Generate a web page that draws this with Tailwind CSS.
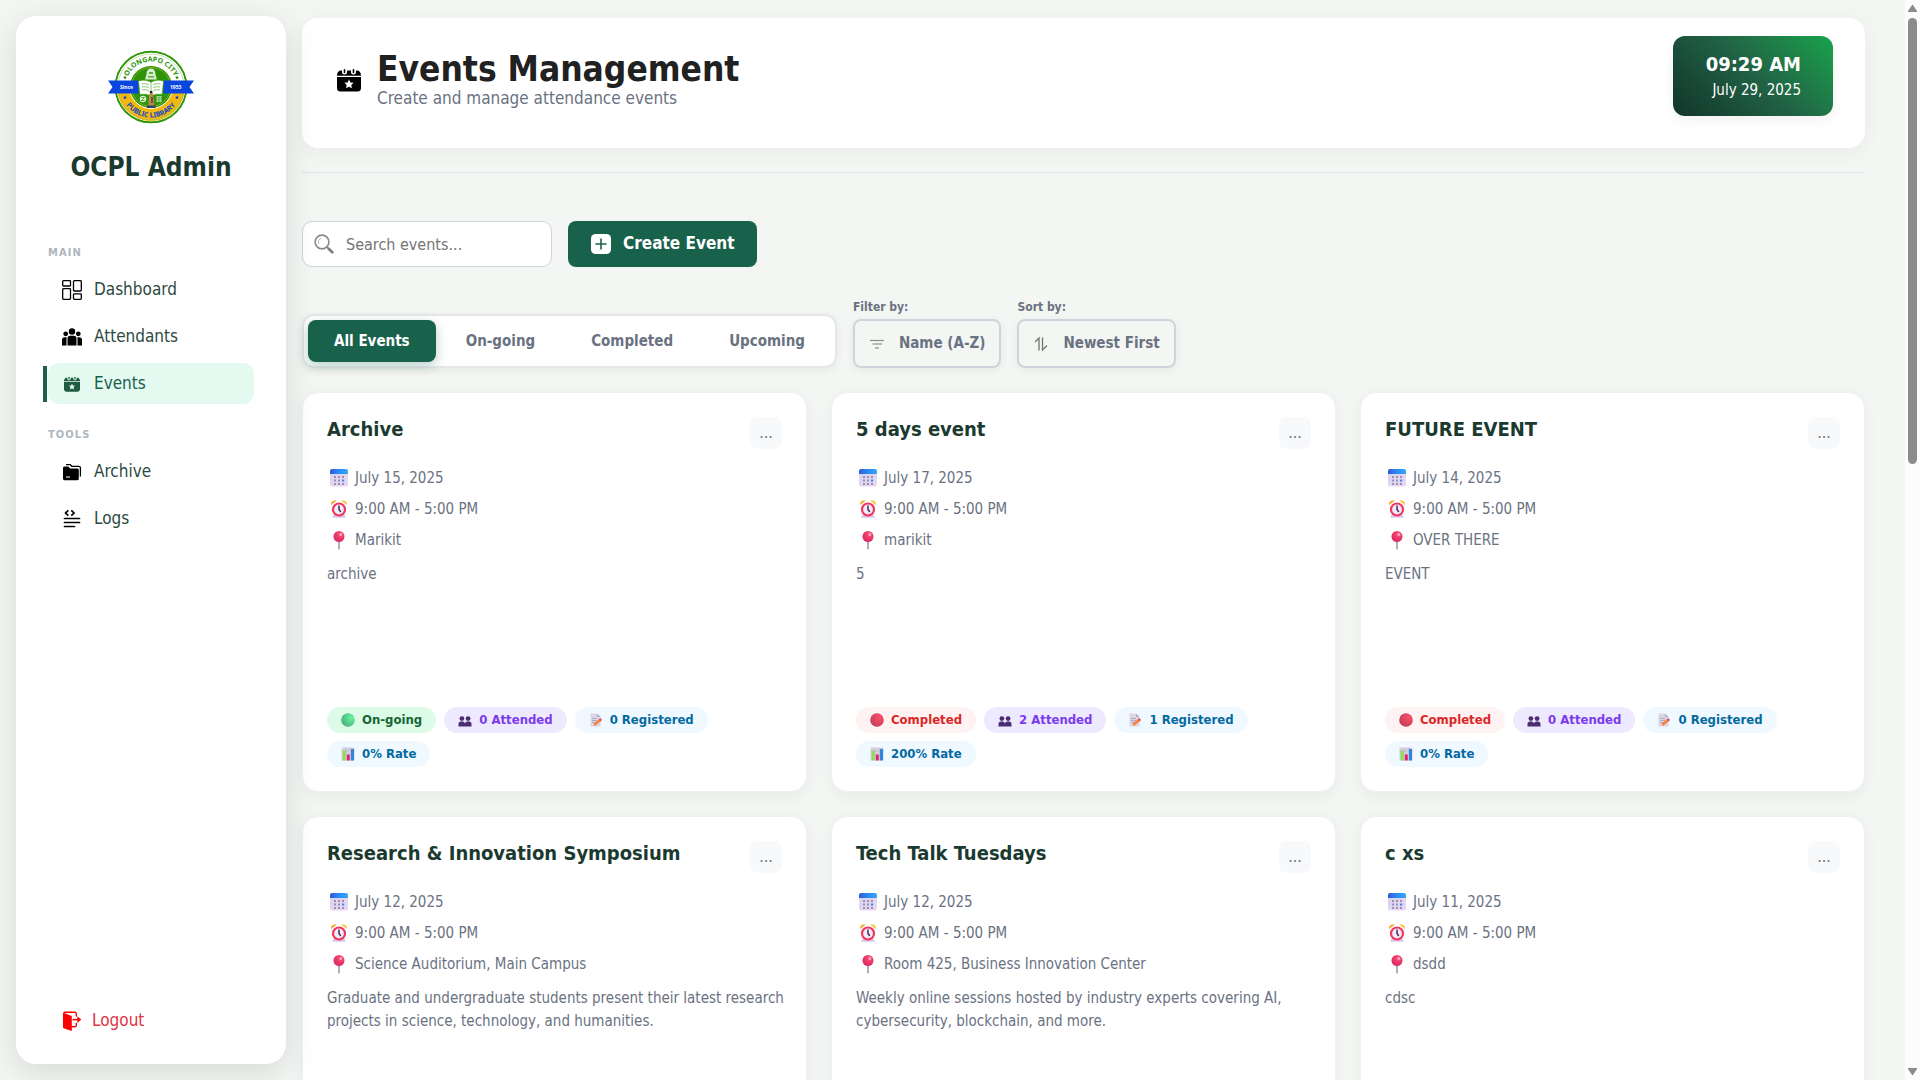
<!DOCTYPE html>
<html lang="en">
<head>
<meta charset="utf-8">
<meta name="viewport" content="width=device-width, initial-scale=1">
<title>Events Management - OCPL Admin</title>
<script src="https://cdn.jsdelivr.net/npm/@tailwindcss/browser@4"></script>
</head>
<body class="flex h-screen overflow-hidden bg-[#f4f6f3] font-['DejaVu_Sans_Condensed','Noto_Sans',sans-serif] text-gray-500">

<svg class="absolute size-0" aria-hidden="true">
  <defs>
    <linearGradient id="calTop" x1="0" x2="1"><stop offset="0" stop-color="#2f5bd8"/><stop offset=".5" stop-color="#2b8cf5"/><stop offset="1" stop-color="#35a6ff"/></linearGradient>
    <linearGradient id="calBody" x1="0" x2="1" y2="1"><stop offset="0" stop-color="#d9d3ee"/><stop offset="1" stop-color="#ead8f3"/></linearGradient>
    <radialGradient id="greenBall" cx=".75" cy=".35" r=".9"><stop offset="0" stop-color="#63f59a"/><stop offset="1" stop-color="#4aa27c"/></radialGradient>
    <radialGradient id="redBall" cx=".7" cy=".3" r=".9"><stop offset="0" stop-color="#fb4f68"/><stop offset="1" stop-color="#b93a55"/></radialGradient>
    <radialGradient id="pinBall" cx=".65" cy=".3" r=".8"><stop offset="0" stop-color="#ff6a8d"/><stop offset=".4" stop-color="#f0386b"/><stop offset="1" stop-color="#d42a63"/></radialGradient>
  </defs>
  <symbol id="i-event" viewBox="0 0 24 24">
    <path fill="currentColor" fill-rule="evenodd" d="M0 9h24v11a3.500 3.500 0 0 1-3.500 3.500h-17A3.500 3.500 0 0 1 0 20zM12 11.500l1.400 2.900 3.200.4-2.300 2.200.6 3.200-2.900-1.500-2.900 1.500.6-3.200-2.300-2.200 3.200-.4z"/>
    <path fill="currentColor" d="M0 7.800C0 4.500 1.500 2.500 4 2.500h1V4a2.500 2.500 0 0 0 5 0V2.500h4V4a2.500 2.500 0 0 0 5 0V2.500h1c2.500 0 4 2 4 5.300z"/>
    <rect x="6.700" y="1" width="1.600" height="4.200" rx=".8" fill="currentColor"/><rect x="15.700" y="1" width="1.600" height="4.200" rx=".8" fill="currentColor"/>
  </symbol>
  <symbol id="i-dash" viewBox="0 0 20 20"><g fill="none" stroke="currentColor" stroke-width="1.300"><rect x=".7" y=".7" width="7.800" height="5.300" rx=".8"/><rect x="11.500" y=".7" width="7.800" height="10.300" rx=".8"/><rect x=".7" y="8.700" width="7.800" height="10.600" rx=".8"/><rect x="11.500" y="13.800" width="7.800" height="5.500" rx=".8"/></g></symbol>
  <symbol id="i-people" viewBox="0 0 20 20"><g fill="currentColor"><circle cx="10" cy="4.500" r="3.200"/><circle cx="3.700" cy="6.800" r="2.400"/><circle cx="16.300" cy="6.800" r="2.400"/><path d="M5.500 18.500v-7A2.700 2.700 0 0 1 8.200 8.800h3.600a2.700 2.700 0 0 1 2.700 2.700v7zM0 18.500v-5.500a2.800 2.800 0 0 1 2.800-2.800h2A4 4 0 0 0 4.500 12v6.500zM20 18.500v-5.500a2.800 2.800 0 0 0-2.800-2.800h-2a4 4 0 0 1 .3 1.800v6.500z"/></g></symbol>
  <symbol id="i-archive" viewBox="0 0 20 20"><path fill="none" stroke="currentColor" stroke-width="1.300" d="M4 2.600h4.200l1.500 1.700h7.200c.9 0 1.500.6 1.500 1.500v8.700"/><path fill="currentColor" fill-rule="evenodd" d="M1 6c0-1 .6-1.600 1.600-1.600h3.600l2 2h7c1 0 1.600.6 1.600 1.600v8.600c0 1-.6 1.600-1.600 1.600H2.600c-1 0-1.600-.6-1.600-1.600zM4 14.600v1h4v-1z"/></symbol>
  <symbol id="i-logs" viewBox="0 0 20 20"><g fill="none" stroke="currentColor" stroke-width="1.700"><path d="M6.300 1.300 3.600 4l2.700 2.700M9.300 1.300 12 4 9.300 6.700"/><path d="M2.500 9.500h15M2.500 13.500h15M2.500 17.500h10" stroke-linecap="round"/></g></symbol>
  <symbol id="i-logout" viewBox="0 0 20 20"><path fill="currentColor" d="M1 1.500 9.800 5v15L1.600 17.300A1 1 0 0 1 1 16.500z"/><path fill="none" stroke="currentColor" stroke-width="1.400" d="M1.700 1.200h11c1 0 1.600.6 1.600 1.600v2.700M9.500 15.800h3.200c1 0 1.600-.6 1.600-1.600v-2.400"/><path stroke="currentColor" stroke-width="1.500" d="M10.500 8.600H17"/><path fill="currentColor" d="M15.300 5.200 19.300 8.600l-4 3.400z"/></symbol>
  <symbol id="i-search" viewBox="0 0 20 20"><circle cx="8" cy="8" r="6.900" fill="none" stroke="#8a8a8a" stroke-width="1.600"/><path fill="none" stroke="#b0b0b0" stroke-width=".9" d="M4.500 10V7a3.500 3.500 0 0 1 3-2.800"/><path stroke="#808080" stroke-width="1.200" d="m12.600 12.600 2 2"/><path stroke="#808080" stroke-width="2.800" stroke-linecap="round" d="m14.700 14.700 3.600 3.600"/></symbol>
  <symbol id="i-plus" viewBox="0 0 20 20"><rect width="20" height="20" rx="4.500" fill="#fff"/><path stroke="#18624b" stroke-width="1.600" stroke-linecap="round" d="M10 5v10M5 10h10"/></symbol>
  <symbol id="i-filter" viewBox="0 0 16 16"><g stroke="#8b8f8b"><path stroke-width="1.200" d="M1 4.500h14"/><path stroke-width="1.600" stroke="#a7aaa7" d="M3.500 8h9.500"/><path stroke-width="1.200" d="M6 12h4"/></g></symbol>
  <symbol id="i-sort" viewBox="0 0 16 16"><g fill="none" stroke="#6f746f" stroke-width="1.300"><path d="M2 6 6 2v12.500M9.500 1.500V14l4.500-4.500"/></g></symbol>
  <symbol id="e-cal" viewBox="0 0 20 20"><path fill="url(#calBody)" d="M1 5h18v11.500a2 2 0 0 1-2 2H3a2 2 0 0 1-2-2z"/><path fill="url(#calTop)" d="M3 1h14a2 2 0 0 1 2 2v3H1V3a2 2 0 0 1 2-2z"/><g fill="#9a8fb5"><path d="M5 8h2v2H5zM9 8h2v2H9zM13 8h2v2h-2zM5 11.500h2v2H5zM9 11.500h2v2H9zM5 15h2v2H5zM9 15h2v2H9zM13 15h2v2h-2z"/></g><path fill="#2b8cf5" d="M13 11.500h2.200v2H13z"/></symbol>
  <symbol id="e-clock" viewBox="0 0 20 20"><path fill="#d9c6ec" d="m4.500 16-1.500 2.800h14L15.500 16z"/><path fill="#f6a92a" d="M2 6C1.500 3 4 .8 7.800 1.800z"/><path fill="#fbc53a" d="M18 6c.5-3-2-5.200-5.800-4.200z"/><circle cx="10" cy="10.500" r="6" fill="#f4eafa" stroke="#f0365f" stroke-width="2.200"/><path fill="none" stroke="#43305f" stroke-width="1.500" stroke-linecap="round" d="M10 7v3.500l1.500 2"/></symbol>
  <symbol id="e-pin" viewBox="0 0 20 20"><path stroke="#aaa3b8" stroke-width="1.800" stroke-linecap="round" d="M10 10v8.500"/><circle cx="10" cy="6.500" r="5.500" fill="url(#pinBall)"/><circle cx="11.800" cy="4.600" r="1.300" fill="#ffb3c6"/></symbol>
  <symbol id="e-green" viewBox="0 0 14 14"><circle cx="7" cy="7" r="6.800" fill="url(#greenBall)"/></symbol>
  <symbol id="e-red" viewBox="0 0 14 14"><circle cx="7" cy="7" r="6.800" fill="url(#redBall)"/></symbol>
  <symbol id="e-users" viewBox="0 0 14 14"><g fill="#4b2d72"><circle cx="3.900" cy="5.600" r="2.400"/><circle cx="10.100" cy="5.600" r="2.400"/><path d="M.5 13.500v-2.500a2.500 2.500 0 0 1 2.500-2.500h1.500A2.500 2.500 0 0 1 7 10.500a2.500 2.500 0 0 1 2.500-2H11a2.500 2.500 0 0 1 2.500 2.500v2.500z"/></g></symbol>
  <symbol id="e-memo" viewBox="0 0 14 14"><path fill="#dcd5e6" d="M1.500.5H8L11.500 4v9.500h-10z"/><path fill="#b9aec9" d="M8 .5 11.500 4H8z"/><path stroke="#a89dbb" stroke-width=".8" d="M3 5.500h5M3 7.500h5M3 9.500h3"/><path stroke="#f98335" stroke-width="2.700" d="m5.200 12 5.600-4.800"/><path stroke="#f0465f" stroke-width="2.700" d="m10.600 7.400 1.600-1.400"/></symbol>
  <symbol id="e-chart" viewBox="0 0 14 14"><rect x=".5" y=".5" width="13" height="13" rx="1" fill="#d6d0de"/><path stroke="#b9b1c6" stroke-width=".5" d="M.5 4h13M5 .5v13M9.500.5v13"/><path fill="#8fdc5a" d="M1.500 3.500h3.200v10H1.500z"/><path fill="#e0246b" d="M5.800 7.500h3v6h-3z"/><path fill="#2f86e0" d="M10 2h3v11.500h-3z"/></symbol>
</svg>

<aside class="relative z-10 my-4 ml-4 flex w-[270px] shrink-0 flex-col rounded-[20px] bg-white px-8 pt-[34px] pb-[21px] shadow-[0_8px_32px_rgba(0,0,0,0.12)]">
  <svg class="mx-auto h-[74px] w-[86px]" viewBox="0 0 86 74" role="img" aria-label="Olongapo City Public Library">
    <defs>
      <path id="arcTop" d="M17.500 37a25.500 25.500 0 0 1 51 0"/>
      <path id="arcBottom" d="M12.500 37a30.500 30.500 0 0 0 61 0"/>
      <clipPath id="lower"><path d="M0 37h86v37H0z"/></clipPath>
    </defs>
    <circle cx="43" cy="37" r="35.500" fill="#fff" stroke="#2d9608" stroke-width="1.500"/>
    <circle cx="43" cy="37" r="34" fill="#f3b80f" clip-path="url(#lower)"/>
    <circle cx="43" cy="37" r="35.300" fill="none" stroke="#2d9608" stroke-width="1.500"/>
    <circle cx="43" cy="37" r="33" fill="none" stroke="#8fbf6a" stroke-width=".5"/>
    <circle cx="43" cy="37" r="21.500" fill="#2d9608" stroke="#fff" stroke-width="1"/>
    <circle cx="43" cy="37" r="19.500" fill="none" stroke="#c3b72b" stroke-width=".6"/>
    <text class="font-['Noto_Sans',sans-serif] text-[7px] font-bold" fill="#2d9608" text-anchor="middle"><textPath href="#arcTop" startOffset="50%">OLONGAPO CITY</textPath></text>
    <text class="font-['Noto_Sans',sans-serif] text-[7px] font-bold" fill="#0b45c9" text-anchor="middle"><textPath href="#arcBottom" startOffset="50%">PUBLIC LIBRARY</textPath></text>
    <path fill="#2d9608" d="m17 25.500.6 1.200 1.300.2-.9.900.2 1.300-1.200-.6-1.200.6.2-1.300-.9-.9 1.300-.2zM69 25.500l.6 1.200 1.300.2-.9.900.2 1.300-1.200-.6-1.200.6.2-1.300-.9-.9 1.300-.2z"/>
    <path fill="#0b45e0" d="M0 30.500h30.500v13H0L4.500 37zM86 30.500H55.500v13H86L81.500 37z"/>
    <text x="12" y="39" class="font-['Noto_Sans',sans-serif] text-[5px] font-bold" fill="#fff">Since</text>
    <text x="62" y="39" class="font-['Noto_Sans',sans-serif] text-[5px] font-bold" fill="#fff">1953</text>
    <path fill="#0b45c9" d="m17 45.500.6 1.200 1.300.2-.9.900.2 1.300-1.200-.6-1.200.6.2-1.300-.9-.9 1.300-.2zM69 45.500l.6 1.200 1.300.2-.9.900.2 1.300-1.200-.6-1.200.6.2-1.300-.9-.9 1.300-.2z"/>
    <path fill="#d9edcf" d="M43 18.500c3.500 0 4.500 3.500 4.500 6l1.500 5H37l1.500-5c0-2.500 1-6 4.500-6z"/>
    <path fill="#5fae48" d="M41 22h4v2h-4zM40 26h6v1.500h-6z"/>
    <path fill="#fff" stroke="#2d9608" stroke-width=".5" d="M30.500 31c5-1.500 9-1 12.500 1.500C46.500 30 50.500 29.500 55.500 31l-1.500 13.500c-4.500-.8-7.700-.2-11 1.500-3.300-1.700-6.500-2.300-11-1.500z"/>
    <path fill="none" stroke="#6cb356" stroke-width=".8" d="M43 32.500V45M33.500 34c3-.6 5-.3 7.500 1M34 37c3-.6 5-.3 7 1M34 40c3-.6 5-.3 7 1M52.500 34c-3-.6-5-.3-7.500 1M52 37c-3-.6-5-.3-7 1M52 40c-3-.6-5-.3-7 1"/>
    <circle cx="35" cy="49" r="3.200" fill="#e9f5e3"/><path fill="none" stroke="#2d9608" stroke-width=".8" d="M33.300 47.500h3.400l-3.400 3h3.400"/>
    <path fill="#b9dda9" d="M48.500 46h5v6h-5z"/><path stroke="#2d9608" stroke-width=".5" d="M51 46v6M48.500 48h5M48.500 50h5"/>
    <path fill="#b98a4d" d="M42 41h2.500l1.500 9v6h-5.500v-6z"/><path fill="#31405f" d="M39 55.500h8.500V58H39z"/><path fill="#1d1d1d" d="M42 41h2v2h-2zM43.500 47h1v6h-1z"/>
  </svg>
  <h2 class="mt-[27px] text-center text-[26px] leading-8 font-bold text-[#1a3a2f]">OCPL Admin</h2>

  <nav class="mt-[62px] flex flex-1 flex-col text-[17px] text-[#2c4a3e]">
    <h3 class="text-[11px] leading-4 font-bold tracking-widest text-[#adb5bd]">MAIN</h3>
    <ul class="mt-2 flex flex-col gap-1.5">
      <li><a href="#" class="flex h-[41px] items-center gap-3 px-3.5"><svg class="size-5 text-black"><use href="#i-dash"/></svg>Dashboard</a></li>
      <li><a href="#" class="flex h-[41px] items-center gap-3 px-3.5"><svg class="size-5 text-black"><use href="#i-people"/></svg>Attendants</a></li>
      <li class="relative"><span class="absolute top-[3px] -left-[5px] h-9 w-1 bg-[#18624b]"></span><a href="#" aria-current="page" class="flex h-[41px] items-center gap-3 rounded-[10px] bg-[#e4faf1] px-3.5 text-[#18624b]"><span class="flex w-5 justify-center"><svg class="size-4 text-[#205c40]"><use href="#i-event"/></svg></span>Events</a></li>
    </ul>
    <h3 class="mt-[23px] text-[11px] leading-4 font-bold tracking-widest text-[#adb5bd]">TOOLS</h3>
    <ul class="mt-2 flex flex-col gap-1.5">
      <li><a href="#" class="flex h-[41px] items-center gap-3 px-3.5"><svg class="size-5 text-black"><use href="#i-archive"/></svg>Archive</a></li>
      <li><a href="#" class="flex h-[41px] items-center gap-3 px-3.5"><svg class="size-5 text-black"><use href="#i-logs"/></svg>Logs</a></li>
    </ul>
    <a href="#" class="mt-auto flex h-11 items-center gap-2.5 px-3.5 text-[#dc3545]"><svg class="size-5 text-[#ff0000]"><use href="#i-logout"/></svg>Logout</a>
  </nav>
</aside>

<main class="min-w-0 flex-1 pt-[18px] pr-10 pl-4">
  <header class="flex min-h-[130px] items-start justify-between rounded-2xl bg-white px-8 pt-[18px] shadow-[0_4px_20px_rgba(0,0,0,0.05)]">
    <div class="flex h-[88px] items-center gap-4 pl-[3px]">
      <svg class="size-6 text-black"><use href="#i-event"/></svg>
      <div>
        <h1 class="text-[35px] leading-9 font-bold text-[#212121]">Events Management</h1>
        <p class="text-[17px] leading-[22px]">Create and manage attendance events</p>
      </div>
    </div>
    <div class="flex h-20 w-40 flex-col justify-center rounded-xl bg-linear-45 from-[#12352a] via-[#206144] to-[#16a34a] pr-8 text-right text-white shadow-[0_4px_12px_rgba(0,0,0,0.06)]">
      <time class="text-xl leading-7 font-bold">09:29 AM</time>
      <span class="text-[15px] leading-6">July 29, 2025</span>
    </div>
  </header>

  <hr class="mt-6 border-[#e0e4e4]">

  <div class="mt-12 flex gap-4">
    <div class="relative w-[250px]">
      <svg class="absolute top-[13px] left-3 size-5"><use href="#i-search"/></svg>
      <input type="search" aria-label="Search events" placeholder="Search events..." class="h-[46px] w-full rounded-[10px] border border-[#d1d5db] bg-white pr-3 pl-[43px] text-base placeholder:text-[#757575]">
    </div>
    <button class="flex h-[46px] items-center gap-3 rounded-lg bg-[#18624b] px-[23px] text-[17px] font-bold text-white"><svg class="size-5"><use href="#i-plus"/></svg>Create Event</button>
  </div>

  <div class="mt-8 flex items-end gap-4">
    <div class="flex gap-1 rounded-xl border-2 border-[#e5e7eb] bg-white p-1 text-[15px] font-bold shadow-[0_2px_8px_rgba(0,0,0,0.06)]">
      <button class="h-[42px] rounded-lg bg-[#18624b] px-[26px] text-white shadow-[0_4px_12px_rgba(24,98,75,0.3)]">All Events</button>
      <button class="h-[42px] px-[26px]">On-going</button>
      <button class="h-[42px] px-[26px]">Completed</button>
      <button class="h-[42px] px-[26px]">Upcoming</button>
    </div>
    <div class="flex flex-col gap-1">
      <label for="filter" class="text-xs leading-4 font-bold">Filter by:</label>
      <button id="filter" class="flex h-[49px] items-center gap-3.5 rounded-lg border-2 border-[#d1d3dc] px-3.5 text-[15px] font-bold shadow-[0_2px_8px_rgba(0,0,0,0.06)]"><svg class="size-4"><use href="#i-filter"/></svg>Name (A-Z)</button>
    </div>
    <div class="flex flex-col gap-1">
      <label for="sort" class="text-xs leading-4 font-bold">Sort by:</label>
      <button id="sort" class="flex h-[49px] items-center gap-3.5 rounded-lg border-2 border-[#d1d3dc] px-3.5 text-[15px] font-bold shadow-[0_2px_8px_rgba(0,0,0,0.06)]"><svg class="size-4"><use href="#i-sort"/></svg>Newest First</button>
    </div>
  </div>

  <section id="events" class="mt-6 grid grid-cols-3 gap-6" aria-label="Events"></section>
</main>

<div class="flex w-[15px] shrink-0 flex-col items-center bg-[#fcfcfc]" aria-hidden="true">
  <svg class="mt-1 h-2 w-[9px]" viewBox="0 0 9 8"><path fill="#8b8b8b" d="M4.500.5 9 7v1H0V7z"/></svg>
  <div class="mt-1.5 h-[446px] w-[9px] rounded-full bg-[#8b8b8b]"></div>
  <svg class="mt-auto mb-1 h-2 w-[9px]" viewBox="0 0 9 8"><path fill="#8b8b8b" d="M4.500 7.500 9 1V0H0v1z"/></svg>
</div>

<script>
const events = [
  { title: 'Archive', date: 'July 15, 2025', place: 'Marikit', text: 'archive', live: true, attended: 0, registered: 0, rate: 0 },
  { title: '5 days event', date: 'July 17, 2025', place: 'marikit', text: '5', attended: 2, registered: 1, rate: 200 },
  { title: 'FUTURE EVENT', date: 'July 14, 2025', place: 'OVER THERE', text: 'EVENT', attended: 0, registered: 0, rate: 0 },
  { title: 'Research &amp; Innovation Symposium', date: 'July 12, 2025', place: 'Science Auditorium, Main Campus', text: 'Graduate and undergraduate students present their latest research projects in science, technology, and humanities.' },
  { title: 'Tech Talk Tuesdays', date: 'July 12, 2025', place: 'Room 425, Business Innovation Center', text: 'Weekly online sessions hosted by industry experts covering AI, cybersecurity, blockchain, and more.' },
  { title: 'c xs', date: 'July 11, 2025', place: 'dsdd', text: 'cdsc' }
];
const meta = (icon, text) => `<li class="flex h-6 items-center gap-1.5 pl-0.5"><svg class="size-5"><use href="#${icon}"/></svg>${text}</li>`;
const badge = (icon, look, text) => `<span class="flex h-[26px] items-center gap-[7px] rounded-full px-3.5 ${look}"><svg class="size-3.5"><use href="#${icon}"/></svg>${text}</span>`;
const badges = e => e.rate === undefined ? '' : `
    <div class="mt-auto flex flex-wrap gap-2 text-[13px] font-bold">
      ${e.live ? badge('e-green', 'bg-[#dcfce7] text-[#166534]', 'On-going') : badge('e-red', 'bg-[#fef2f2] text-[#dc2626]', 'Completed')}
      ${badge('e-users', 'bg-[#ede9fe] text-[#7c3aed]', e.attended + ' Attended')}
      ${badge('e-memo', 'bg-[#f0f9ff] text-[#0369a1]', e.registered + ' Registered')}
      ${badge('e-chart', 'bg-[#f0f9ff] text-[#0369a1]', e.rate + '% Rate')}
    </div>`;
document.getElementById('events').innerHTML = events.map(e => `
  <article class="flex min-h-[400px] flex-col rounded-2xl border border-[#eef1f5] bg-white p-6 shadow-[0_4px_16px_rgba(0,0,0,0.05)]">
    <div class="flex items-start justify-between">
      <h2 class="text-xl leading-6 font-bold text-[#1a3a2f]">${e.title}</h2>
      <button aria-label="Event options" class="size-8 rounded-lg bg-[#f8f9fb] text-base">...</button>
    </div>
    <ul class="mt-[17px] flex flex-col gap-[7px] text-[15px]">
      ${meta('e-cal', e.date)}${meta('e-clock', '9:00 AM - 5:00 PM')}${meta('e-pin', e.place)}
    </ul>
    <p class="mt-[11px] -mr-2 mb-4 text-[15px] leading-[23px]">${e.text}</p>${badges(e)}
  </article>`).join('');
</script>
</body>
</html>
